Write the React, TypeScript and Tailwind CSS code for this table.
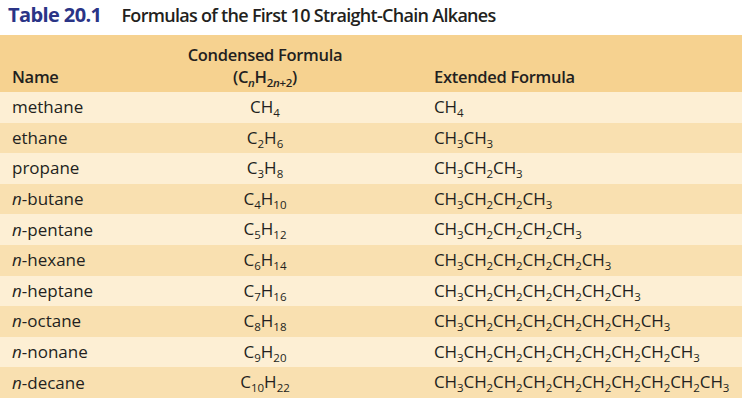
import React from "react";

const Sub = ({ children }: { children: React.ReactNode }) => (
  <span className="text-[11.5px] align-[-4px] leading-none">{children}</span>
);

const ext = (n: number) => {
  if (n === 1) {
    return (
      <>CH<Sub>4</Sub></>
    );
  }
  const parts: React.ReactNode[] = [];
  parts.push(<React.Fragment key="a">CH<Sub>3</Sub></React.Fragment>);
  for (let i = 0; i < n - 2; i++) {
    parts.push(<React.Fragment key={"m" + i}>CH<Sub>2</Sub></React.Fragment>);
  }
  parts.push(<React.Fragment key="z">CH<Sub>3</Sub></React.Fragment>);
  return <>{parts}</>;
};

const rows: { name: React.ReactNode; n: number }[] = [
  { name: "methane", n: 1 },
  { name: "ethane", n: 2 },
  { name: "propane", n: 3 },
  { name: <><i>n</i>-butane</>, n: 4 },
  { name: <><i>n</i>-pentane</>, n: 5 },
  { name: <><i>n</i>-hexane</>, n: 6 },
  { name: <><i>n</i>-heptane</>, n: 7 },
  { name: <><i>n</i>-octane</>, n: 8 },
  { name: <><i>n</i>-nonane</>, n: 9 },
  { name: <><i>n</i>-decane</>, n: 10 },
];

const cond = (n: number) => (
  <>
    C{n > 1 ? <Sub>{n}</Sub> : null}H<Sub>{2 * n + 2}</Sub>
  </>
);

export default function App() {
  return (
    <div
      className="w-[742px] h-[403px] bg-white text-[#231f20] overflow-hidden"
      style={{ fontFamily: "'Open Sans', 'Noto Sans', sans-serif" }}
    >
      <div className="h-[35px] flex items-center pl-[8px] pb-[5px] whitespace-nowrap">
        <span className="text-[20px] font-bold text-[#2a3486] tracking-[-0.6px]">Table 20.1</span>
        <span className="ml-[20px] text-[18px] font-semibold tracking-[-0.7px]">
          Formulas of the First 10 Straight-Chain Alkanes
        </span>
      </div>
      <div className="bg-[#f6d290] h-[57px] grid grid-cols-[200px_130px_1fr] text-[16.5px] font-semibold tracking-[-0.3px] whitespace-nowrap leading-[22px]">
        <div className="pl-[12px] flex items-end pb-[4px]">Name</div>
        <div className="flex flex-col items-center justify-end pb-[4px]">
          <div>Condensed Formula</div>
          <div>
            (C<Sub><i>n</i></Sub>H<Sub>2<i>n</i>+2</Sub>)
          </div>
        </div>
        <div className="pl-[104px] flex items-end pb-[4px]">Extended Formula</div>
      </div>
      {rows.map((r, i) => (
        <div
          key={i}
          className={
            "h-[30.6px] grid grid-cols-[200px_130px_1fr] items-center text-[17px] leading-[22px] whitespace-nowrap " +
            (i % 2 === 0 ? "bg-[#fdefd4]" : "bg-[#f9e0b0]")
          }
        >
          <div className="pl-[12px]">{r.name}</div>
          <div className="text-center">{cond(r.n)}</div>
          <div className="pl-[104px] tracking-[-0.1px]">{ext(r.n)}</div>
        </div>
      ))}
    </div>
  );
}
